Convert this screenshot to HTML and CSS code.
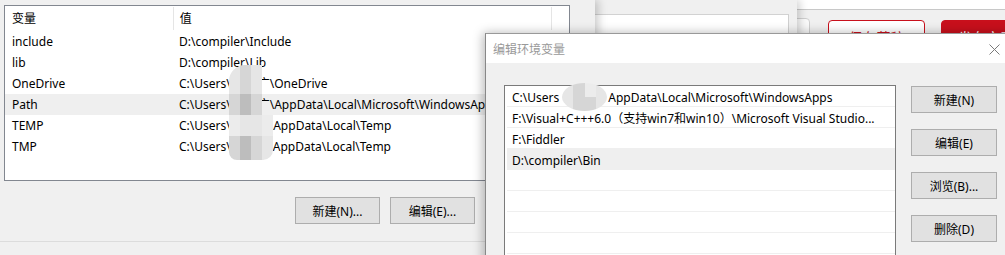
FILE: index.html
```html
<!DOCTYPE html>
<html lang="zh-CN">
<head>
<meta charset="utf-8">
<title>编辑环境变量</title>
<link rel="stylesheet" href="styles.css">
</head>
<body>
<div class="desk">

  <div class="win browser">
    <div class="br-top"></div>
    <div class="br-bar">
      <div class="br-input"></div>
      <div class="br-btn br-save">保存草稿</div>
      <div class="br-btn br-pub">发布文章</div>
    </div>
  </div>

  <div class="win sysprops">
    <div class="sp-gap"></div>
    <div class="sp-box"></div>
  </div>

  <div class="win envwin">
    <div class="grid">
      <div class="g-row g-head">
        <div class="c1">变量</div>
        <div class="c2">值</div>
        <div class="c3"></div>
      </div>
      <div class="g-row"><div class="c1">include</div><div class="c2">D:\compiler\Include</div></div>
      <div class="g-row"><div class="c1">lib</div><div class="c2">D:\compiler\Lib</div></div>
      <div class="g-row"><div class="c1">OneDrive</div><div class="c2">C:\Users\<span class="hide w1"></span>广\OneDrive</div></div>
      <div class="g-row sel"><div class="c1">Path</div><div class="c2">C:\Users\<span class="hide w1"></span>广\AppData\Local\Microsoft\WindowsApps;</div></div>
      <div class="g-row"><div class="c1">TEMP</div><div class="c2">C:\Users\<span class="hide w2"></span>\AppData\Local\Temp</div></div>
      <div class="g-row"><div class="c1">TMP</div><div class="c2">C:\Users\<span class="hide w3"></span>AppData\Local\Temp</div></div>
    </div>
    <div class="btnrow">
      <button class="btn">新建(N)...</button>
      <button class="btn">编辑(E)...</button>
      <button class="btn">删除(L)</button>
    </div>
    <div class="sep"></div>
  </div>

  <div class="blob blob-left">
    <div class="t a"></div><div class="t b"></div><div class="t a"></div><div class="t e"></div>
    <div class="t b"></div><div class="t d"></div><div class="t b"></div><div class="t e"></div>
    <div class="t c"></div><div class="t a"></div><div class="t a"></div><div class="t c"></div>
    <div class="t b"></div><div class="t d"></div><div class="t b"></div><div class="t a"></div>
  </div>

  <div class="win dialog">
    <div class="titlebar">
      <span class="title">编辑环境变量</span>
      <svg class="close" width="11" height="11" viewBox="0 0 11 11"><path d="M0.5 0.5 L10.5 10.5 M10.5 0.5 L0.5 10.5" stroke="#7a7a7a" stroke-width="1" fill="none"/></svg>
    </div>
    <div class="dbody">
      <div class="plist">
        <div class="p-row">C:\Users<span class="hide w4"></span>AppData\Local\Microsoft\WindowsApps</div>
        <div class="p-row">F:\Visual+C+++6.0（支持win7和win10）\Microsoft Visual Studio...</div>
        <div class="p-row">F:\Fiddler</div>
        <div class="p-row sel">D:\compiler\Bin</div>
        <div class="p-row"></div>
        <div class="p-row"></div>
        <div class="p-row"></div>
        <div class="p-row"></div>
      </div>
      <div class="dbtns">
        <button class="btn">新建(N)</button>
        <button class="btn">编辑(E)</button>
        <button class="btn">浏览(B)...</button>
        <button class="btn">删除(D)</button>
      </div>
    </div>
  </div>

  <div class="blob blob-dlg">
    <div class="t a"></div><div class="t b"></div><div class="t c"></div><div class="t a"></div>
    <div class="t a"></div><div class="t b"></div><div class="t b"></div><div class="t a"></div>
  </div>

</div>
</body>
</html>
```

FILE: styles.css
```css
* { box-sizing: border-box; }
html, body { margin: 0; padding: 0; }
body {
  width: 1005px;
  height: 255px;
  overflow: hidden;
  background: #f0f0f0;
  font-family: "Microsoft YaHei UI", "Segoe UI", "Noto Sans", "Noto Sans CJK SC", sans-serif;
  font-size: 12px;
  color: #000;
}
.desk { position: relative; width: 1005px; height: 255px; overflow: hidden; }
.win { position: absolute; }

/* background browser window */
.browser {
  left: 790px; top: 0; width: 260px; height: 80px;
  background: #f0f0f0;
}
.br-top { height: 10px; background: #fff; border-bottom: 1px solid #c8c8c8; }
.br-bar { display: flex; align-items: flex-start; padding-top: 10px; }
.br-input {
  flex: 0 0 20px; height: 40px; margin-top: -2px;
  background: #fafafa; border: 1px solid #cfcfcf; border-radius: 0 4px 0 0;
}
.br-btn {
  flex: 0 0 auto;
  height: 34px; border-radius: 4px;
  font-size: 14px; line-height: 33px; text-align: center;
}
.br-save {
  width: 97px; margin-left: 18px;
  border: 1px solid #c8101c; color: #c8101c; background: #fff;
}
.br-pub {
  width: 90px; margin-left: 16px;
  background: #c8101c; color: #fff; border: 1px solid #c8101c;
}

/* system properties window behind */
.sysprops {
  left: 560px; top: 0; width: 237px; height: 80px;
  background: #f0f0f0;
  box-shadow: 3px 0 8px rgba(0,0,0,0.18);
}
.sp-gap { height: 14px; }
.sp-box {
  width: 229px; height: 60px;
  background: #fff;
  border-top: 1px solid #d2d2d2;
  border-right: 1px solid #cfcfcf;
}

/* main environment variable window */
.envwin {
  left: 0; top: 0; width: 595px; height: 255px;
  background: #f0f0f0;
  box-shadow: 3px 0 9px rgba(0,0,0,0.22);
  padding: 5px 0 0 4px;
  display: flex; flex-direction: column;
}
.grid {
  width: 566px; height: 176px;
  background: #fff;
  border: 1px solid #828790;
}
.g-row { display: flex; height: 21px; line-height: 21px; white-space: nowrap; }
.g-row.g-head { height: 25px; line-height: 24px; }
.g-row.sel { background: #efefef; }
.c1 { width: 168px; padding-left: 7px; }
.c2 { width: 379px; padding-left: 6px; overflow: hidden; }
.c3 { width: 17px; }
.g-head .c1, .g-head .c2 { border-right: 1px solid #e5e5e5; margin-top: 1px; height: 23px; }
.g-head .c1 { width: 169px; }
.g-head .c2 { width: 379px; padding-left: 6px; }
.hide { display: inline-block; vertical-align: top; }
.w1 { width: 27px; }
.w2 { width: 38px; }
.w3 { width: 42px; }
.w4 { width: 49px; }

.btnrow {
  display: flex; justify-content: flex-end; gap: 10px;
  width: 566px; margin-top: 16px;
}
.btn {
  width: 85px; height: 27px;
  background: #e1e1e1; border: 1px solid #adadad;
  font: inherit; color: #000; padding: 0;
}
.sep {
  margin: 17px 0 0 -4px;
  width: 595px;
  border-top: 1px solid #dcdcdc;
}

/* blurred mosaics */
.blob {
  position: absolute;
  display: grid;
  overflow: hidden;
  filter: blur(0.6px);
}
.blob .t.a { background: #e6e6e6; }
.blob .t.b { background: #d6d6d6; }
.blob .t.c { background: #ececec; }
.blob .t.d { background: #bdbdbd; }
.blob .t.e { background: transparent; }
.blob-left {
  left: 229px; top: 65px; width: 44px; height: 95px;
  grid-template-columns: 11px 11px 11px 11px;
  grid-template-rows: 29px 21px 21px 24px;
  border-radius: 16px 10px 10px 8px;
}
.blob-dlg {
  left: 562px; top: 83px; width: 45px; height: 28px;
  grid-template-columns: repeat(4, 1fr);
  grid-template-rows: repeat(2, 14px);
  border-radius: 50%;
}

/* edit dialog */
.dialog {
  left: 485px; top: 33px; width: 540px; height: 240px;
  background: #f0f0f0;
  border-left: 1px solid #888;
  border-top: 1px solid #999;
  box-shadow: -2px 0 10px rgba(0,0,0,0.28);
}
.titlebar {
  height: 29px; background: #fff;
  display: flex; align-items: center; justify-content: space-between;
  padding: 0 25px 0 7px;
}
.title { color: #999; font-size: 12px; }
.close { display: block; margin-top: 1px; }
.dbody { display: flex; align-items: flex-start; padding: 22px 0 0 18px; }
.plist {
  width: 392px; height: 200px;
  background: #fff;
  border: 1px solid #7a7a7a;
  padding-left: 2px;
}
.p-row {
  height: 21px; line-height: 24px;
  border-bottom: 1px solid #efefef;
  padding-left: 5px;
  white-space: nowrap;
}
.p-row.sel { background: #efefef; }
.dbtns {
  display: flex; flex-direction: column; gap: 16px;
  margin: 1px 0 0 15px;
}
.dbtns .btn { width: 86px; }
```
